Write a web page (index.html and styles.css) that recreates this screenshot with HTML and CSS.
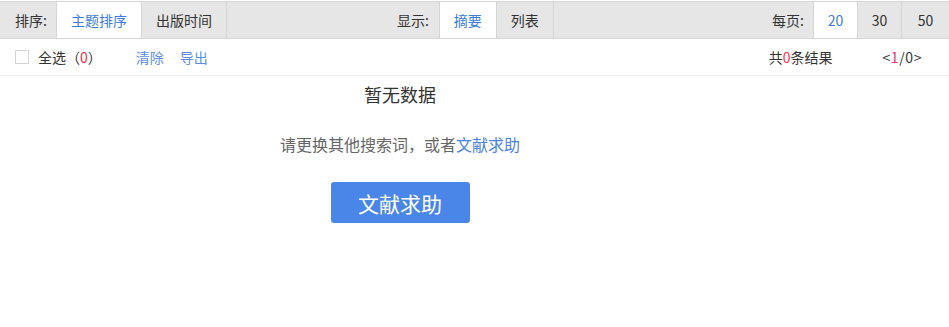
FILE: index.html
```html
<!DOCTYPE html>
<html lang="zh-CN">
<head>
  <meta charset="UTF-8" />
  <meta name="viewport" content="width=device-width, initial-scale=1.0" />
  <title>检索结果</title>
  <link rel="stylesheet" href="styles.css">
</head>
<body>
  <div class="toolbar">
    <div class="group sort-group">
      <span class="label">排序:</span>
      <a class="tab active" href="#">主题排序</a>
      <a class="tab" href="#">出版时间</a>
    </div>
    <div class="group view-group">
      <span class="label">显示:</span>
      <a class="tab active" href="#">摘要</a>
      <a class="tab" href="#">列表</a>
    </div>
    <div class="group page-group">
      <span class="label">每页:</span>
      <a class="tab num active" href="#">20</a>
      <a class="tab num" href="#">30</a>
      <a class="tab num last" href="#">50</a>
    </div>
  </div>

  <div class="actions">
    <label class="select-all">
      <span class="checkbox"></span>
      全选<span class="count">（<em>0</em>）</span>
    </label>
    <a class="action" href="#">清除</a>
    <a class="action" href="#">导出</a>
    <div class="total">共<em>0</em>条结果</div>
    <div class="pager">&lt;<em>1</em>/0&gt;</div>
  </div>

  <div class="empty">
    <div class="empty-title">暂无数据</div>
    <div class="empty-hint">请更换其他搜索词，或者<a href="#">文献求助</a></div>
    <button class="help-btn">文献求助</button>
  </div>
</body>
</html>
```

FILE: styles.css
```css
body {
  margin: 0;
  padding: 1px 0 0;
  font-family: "Noto Sans CJK SC", "Microsoft YaHei", sans-serif;
  font-size: 14px;
  color: #333;
  background: #fff;
}

a {
  text-decoration: none;
}

em {
  font-style: normal;
}

.toolbar {
  display: flex;
  height: 36px;
  background: #e6e6e6;
  border-top: 1px solid #d6d6d6;
  border-bottom: 1px solid #d6d6d6;
}

.group {
  display: flex;
  align-items: stretch;
}

.label {
  display: flex;
  align-items: center;
  padding: 0 9px 0 15px;
  color: #333;
}

.view-group {
  margin-left: 155px;
}

.page-group {
  margin-left: auto;
}

.tab {
  display: flex;
  align-items: center;
  padding: 0 14px;
  color: #333;
  border-right: 1px solid #d6d6d6;
}

.tab:first-of-type {
  border-left: 1px solid #d6d6d6;
}

.view-group .tab:first-of-type {
  margin-left: 1px;
}

.tab.active {
  background: #fff;
  color: #3b7ddd;
}

.tab.num {
  width: 43px;
  padding: 0;
  justify-content: center;
}

.tab.last {
  width: 47px;
  border-right: none;
}

.actions {
  display: flex;
  align-items: center;
  height: 36px;
  border-bottom: 1px solid #ebebeb;
  padding: 0 27px 0 15px;
}

.select-all {
  display: flex;
  align-items: center;
  color: #333;
  margin-right: 34px;
}

.checkbox {
  width: 12px;
  height: 12px;
  border: 1px solid #d4d4d4;
  margin-right: 9px;
}

.count em {
  color: #f0324b;
}

.action {
  color: #5b8fe3;
  margin-right: 16px;
}

.total {
  margin-left: auto;
  margin-right: 50px;
}

.total em {
  color: #ff3348;
}

.pager {
  letter-spacing: 0.6px;
}

.pager em {
  color: #f5297f;
}

.empty {
  width: 800px;
  text-align: center;
}

.empty-title {
  margin-top: 6px;
  font-size: 18px;
  line-height: 24px;
  color: #333;
}

.empty-hint {
  margin-top: 27px;
  font-size: 16px;
  line-height: 22px;
  color: #666;
}

.empty-hint a {
  color: #4a82e6;
}

.help-btn {
  margin-top: 27px;
  width: 139px;
  height: 41px;
  border: none;
  border-radius: 3px;
  background: #4a86e8;
  color: #fff;
  font-family: inherit;
  font-size: 21px;
  cursor: pointer;
}
```
